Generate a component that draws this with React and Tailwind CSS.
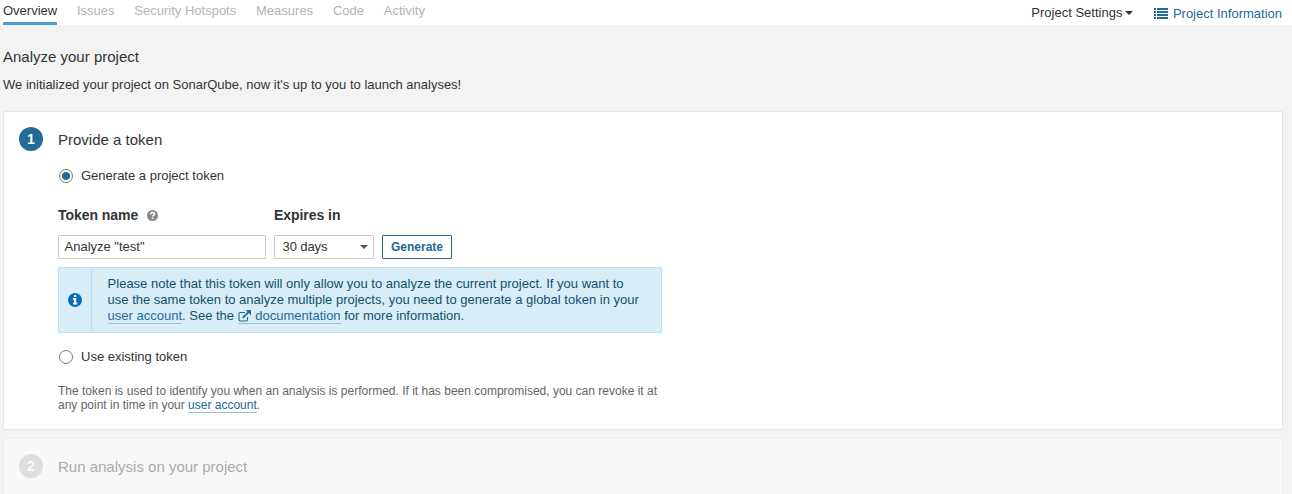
const linkCls = "border-b border-[#9fc0d2] text-[#236a97]";

function ListIcon() {
  return (
    <svg width="14" height="11" viewBox="0 0 14 11" fill="#236a97" className="relative -top-px block" shapeRendering="crispEdges">
      {[0, 3, 6, 9].map((y) => (
        <g key={y}>
          <rect x="0" y={y} width="2" height="2" />
          <rect x="3" y={y} width="11" height="2" />
        </g>
      ))}
    </svg>
  );
}

function Caret({ color, className = "" }) {
  return (
    <svg width="8" height="4" viewBox="0 0 8 4" className={className}>
      <path d="M0 0h8L4 4z" fill={color} />
    </svg>
  );
}

function HelpIcon() {
  return (
    <svg width="11" height="11" viewBox="0 0 10 10" className="block">
      <circle cx="5" cy="5" r="5" fill="#888" />
      <path d="M3.3 3.9C3.3 2.7 4 2.2 5 2.2s1.8.6 1.8 1.5C6.8 4.7 5.2 4.8 5.2 6" fill="none" stroke="#fff" strokeWidth="1.4" />
      <rect x="4.4" y="6.7" width="1.5" height="1.4" fill="#fff" />
    </svg>
  );
}

function InfoIcon() {
  return (
    <svg width="14" height="14" viewBox="0 0 14 14" className="block">
      <circle cx="7" cy="7" r="7" fill="#0271b9" />
      <path d="M6 2h2.2v2H6zM5 5h3.2v4.8h1v1.8H5V9.8h1V6.8H5z" fill="#fff" />
    </svg>
  );
}

function ExternalIcon() {
  return (
    <svg width="13" height="12" viewBox="0 0 13 12" className="mr-px inline-block align-[-2px]" fill="none" stroke="#236a97">
      <path d="M7 2.5H2.4A1.4 1.4 0 0 0 1 3.9v5.7A1.4 1.4 0 0 0 2.4 11h5.7a1.4 1.4 0 0 0 1.4-1.4V7" strokeWidth="1.1" />
      <path d="M4.8 7.8L10.5 2.1" strokeWidth="1.9" />
      <path d="M7.5 0H13v5.2z" fill="#236a97" stroke="none" />
    </svg>
  );
}

function Radio({ checked }) {
  return (
    <span className="flex size-[14px] items-center justify-center rounded-full border border-[#777] bg-white">
      {checked && <span className="size-2 rounded-full bg-[#236a97]" />}
    </span>
  );
}

export default function App() {
  return (
    <div className="h-[494px] w-[1292px] overflow-hidden bg-[#f3f3f3] font-['Liberation_Sans',Arial,sans-serif] text-[13px] leading-4 text-[#333]">
      <header className="flex h-[25px] justify-between bg-white pl-[3px] pr-[10px]">
        <nav className="flex gap-[19.8px] pt-[3px] text-[#b4b4b4]">
          <span className="h-[22px] border-b-[3px] border-[#4b9fd5] text-[#333]">Overview</span>
          <span>Issues</span>
          <span>Security Hotspots</span>
          <span>Measures</span>
          <span>Code</span>
          <span>Activity</span>
        </nav>
        <div className="flex items-start">
          <span className="flex items-center pt-[5px]">
            Project Settings
            <Caret color="#333" className="ml-[3px]" />
          </span>
          <span className="flex items-center gap-[5px] pl-[20.5px] pt-[6px] text-[#236a97]">
            <ListIcon />
            Project Information
          </span>
        </div>
      </header>

      <main className="pl-[3px] pr-[9px]">
        <h1 className="pt-[22px] text-[15px] leading-5">Analyze your project</h1>
        <p className="pt-[10px]">We initialized your project on SonarQube, now it's up to you to launch analyses!</p>

        <section className="mt-[18px] flex h-[319px] border border-[#e6e6e6] bg-white pl-[15px] pt-[15px]">
          <div className="flex size-6 items-center justify-center rounded-full bg-[#236a97] text-[14px] font-bold text-white">1</div>
          <div className="pl-[15px]">
            <h2 className="pt-[3px] text-[15px] leading-5">Provide a token</h2>
            <label className="mt-[18px] flex h-4 items-center gap-[8px] pl-px">
              <Radio checked />
              Generate a project token
            </label>
            <div className="mt-[21px] flex h-5 items-center text-[14px] font-bold tracking-[-0.05px]">
              <span className="flex w-[216px] items-center gap-[9px]">
                Token name
                <HelpIcon />
              </span>
              <span>Expires in</span>
            </div>
            <div className="mt-[10px] flex h-6 gap-2">
              <div className="flex w-[208px] items-center rounded-[1px] border border-[#ccc] pl-[5.5px]">Analyze "test"</div>
              <div className="flex w-[100px] items-center justify-between rounded-[1px] border border-[#ccc] pl-[7.5px] pr-[5px]">
                <span className="tracking-[-0.1px]">30 days</span>
                <Caret color="#555" />
              </div>
              <button className="w-[70px] rounded-[1px] border border-[#236a97] text-center text-[12px] font-bold text-[#236a97]">Generate</button>
            </div>
            <div className="mt-2 flex h-[66px] w-[604px] rounded-[1px] border border-[#b1dff3] bg-[#d9edf7] text-[#0e516f]">
              <div className="flex w-[33px] items-center justify-center border-r border-[#b1dff3]">
                <InfoIcon />
              </div>
              <p className="whitespace-nowrap pl-[15.6px] pt-2">
                Please note that this token will only allow you to analyze the current project. If you want to
                <br />
                use the same token to analyze multiple projects, you need to generate a global token in your
                <br />
                <span className={linkCls}>user account</span>. See the{" "}
                <span className={linkCls}>
                  <ExternalIcon /> documentation
                </span>{" "}
                for more information.
              </p>
            </div>
            <label className="mt-4 flex h-4 items-center gap-[8px] pl-px">
              <Radio />
              Use existing token
            </label>
            <p className="mt-[19px] whitespace-nowrap text-[12px] leading-[14px] text-[#666]">
              The token is used to identify you when an analysis is performed. If it has been compromised, you can revoke it at
              <br />
              any point in time in your <span className={linkCls}>user account</span>.
            </p>
          </div>
        </section>

        <section className="mt-2 flex h-[70px] border border-[#eee] bg-[#f8f8f8] pl-[15px] pt-[15px]">
          <div className="flex size-6 items-center justify-center rounded-full bg-[#dedede] text-[14px] font-bold text-[#f8f8f8]">2</div>
          <h2 className="pl-[15px] pt-[3px] text-[15px] leading-5 text-[#aaa]">Run analysis on your project</h2>
        </section>
      </main>
    </div>
  );
}
